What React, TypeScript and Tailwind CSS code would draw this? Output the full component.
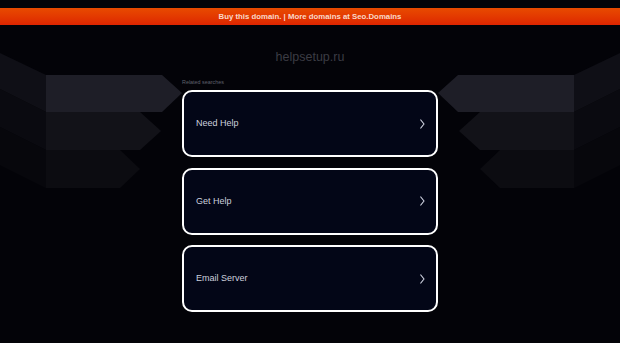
import React from "react";

const items = ["Need Help", "Get Help", "Email Server"];

function Decor() {
  const shapes = (
    <>
      <polygon points="0,53 46,75 46,112 0,89" fill="#0f0f16" />
      <polygon points="46,75 162,75 182,93 162,112 46,112" fill="#1e1e27" />
      <polygon points="0,89 46,112 46,150 0,127" fill="#0a0a10" />
      <polygon points="46,112 140,112 161,131 140,150 46,150" fill="#121218" />
      <polygon points="0,127 46,150 46,188 0,165" fill="#07070c" />
      <polygon points="46,150 120,150 140,169 120,188 46,188" fill="#0c0c11" />
    </>
  );
  return (
    <svg className="absolute inset-0" width="620" height="343" viewBox="0 0 620 343">
      {shapes}
      <g transform="matrix(-1 0 0 1 620 0)">{shapes}</g>
    </svg>
  );
}

export default function App() {
  return (
    <div
      className="relative w-[620px] h-[343px] overflow-hidden bg-[#030308]"
      style={{ fontFamily: '"Liberation Sans", Arial, sans-serif' }}
    >
      <Decor />
      <div className="relative flex flex-col items-center pt-[8px]">
        <div className="w-full h-[17px] bg-gradient-to-b from-[#e84a00] to-[#de2400] flex items-center justify-center">
          <span className="text-[7.8px] leading-none font-bold text-[#f9d9c8]">
            Buy this domain. | More domains at Seo.Domains
          </span>
        </div>
        <div className="mt-[26px] h-[12px] flex items-center text-[12.5px] leading-none text-[#3b3c44]">
          helpsetup.ru
        </div>
        <div className="w-[256px] mt-[17px]">
          <div className="h-[6px] flex items-center text-[5.4px] leading-none text-[#5f606c]">
            Related searches
          </div>
          <div className="mt-[4px] flex flex-col gap-[10.5px]">
            {items.map((t) => (
              <div
                key={t}
                className="h-[67px] rounded-[10px] border-2 border-white bg-[#030617] flex items-center justify-between pl-[12px] pr-[11px]"
              >
                <span className="text-[9px] leading-none text-[#cdd0de]">{t}</span>
                <svg width="5" height="10" viewBox="0 0 5 10">
                  <path d="M0.8 1 L4 5 L0.8 9" fill="none" stroke="#cdd0de" strokeWidth="1.2" strokeLinecap="round" strokeLinejoin="round" />
                </svg>
              </div>
            ))}
          </div>
        </div>
      </div>
    </div>
  );
}
